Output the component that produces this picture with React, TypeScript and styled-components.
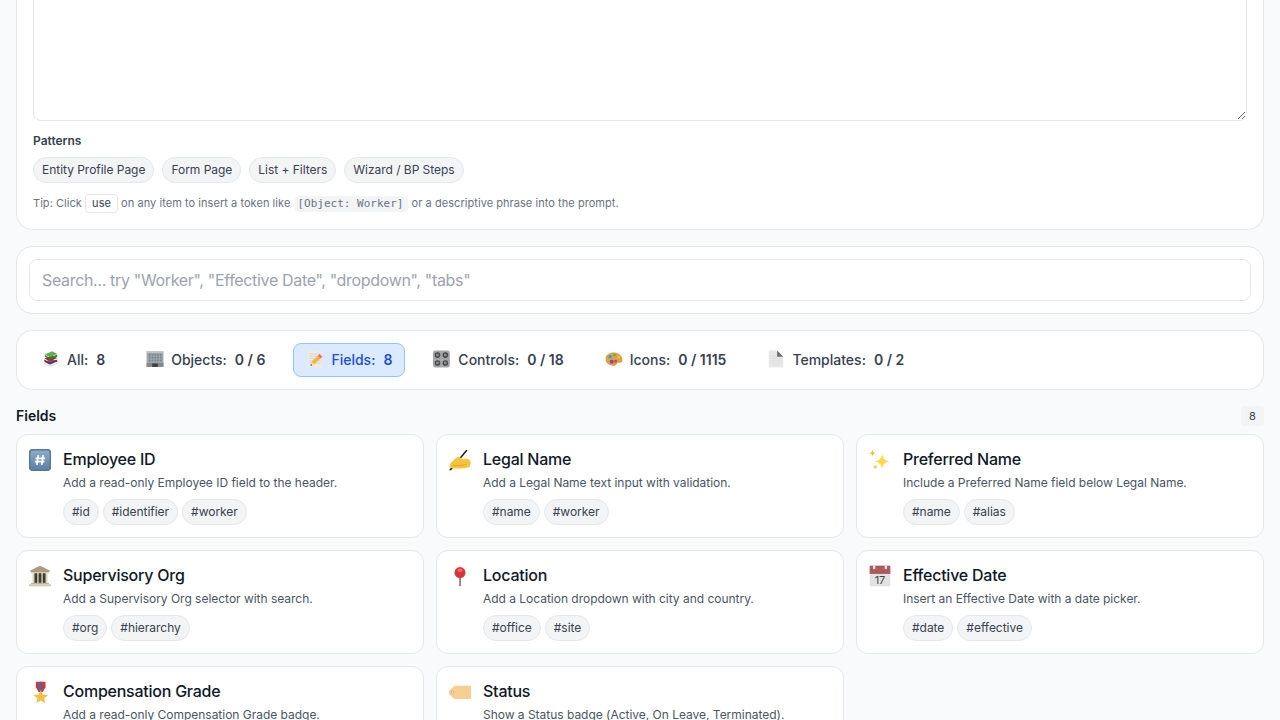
import { ReactNode } from "react";
import styled, { createGlobalStyle } from "styled-components";

const GlobalStyle = createGlobalStyle`
  html, body {
    margin: 0;
    height: 720px;
    overflow: hidden;
    background: #f9fafb;
    font-family: Inter, "Noto Sans", sans-serif;
    color: #111827;
  }
  * { box-sizing: border-box; }
`;

const Page = styled.div`
  display: flex;
  flex-direction: column;
  gap: 16px;
  padding: 0 16px;
  margin-top: -60px;
`;

const Panel = styled.section<{ $pad: number }>`
  background: #fff;
  border: 1px solid #e5e7eb;
  border-radius: 16px;
  padding: ${(p) => p.$pad}px;
`;

const Prompt = styled.textarea`
  display: block;
  width: 100%;
  height: 164px;
  border: 1px solid #e5e7eb;
  border-radius: 8px;
  background: #fff;
  resize: vertical;
  outline: none;
`;

const PatternLabel = styled.div`
  margin-top: 12px;
  font-size: 12px;
  line-height: 16px;
  font-weight: 600;
  color: #374151;
`;

const ChipRow = styled.div<{ $gap: number; $top: number }>`
  display: flex;
  gap: ${(p) => p.$gap}px;
  margin-top: ${(p) => p.$top}px;
`;

const Chip = styled.span`
  display: inline-flex;
  align-items: center;
  height: 26px;
  padding: 0 8px 2px;
  border: 1px solid #e5e7eb;
  border-radius: 999px;
  background: #f3f4f6;
  font-size: 12px;
  letter-spacing: -0.03px;
  color: #374151;
`;

const Tip = styled.div`
  margin-top: 10px;
  height: 20px;
  font-size: 11px;
  line-height: 20px;
  letter-spacing: 0.05px;
  color: #6b7280;
  white-space: pre;
`;

const Kbd = styled.kbd`
  display: inline-block;
  height: 19px;
  padding: 0 6px;
  border: 1px solid #e5e7eb;
  border-radius: 4px;
  background: #fff;
  font-family: inherit;
  font-size: 11px;
  line-height: 17px;
  color: #374151;
`;

const Code = styled.code`
  display: inline-block;
  height: 16px;
  margin-left: 1px;
  padding: 0 5px 0 3px;
  border-radius: 4px;
  background: #f3f4f6;
  font-family: "DejaVu Sans Mono", monospace;
  font-size: 11px;
  line-height: 16px;
  letter-spacing: 0;
  color: #6b7280;
`;

const SearchInput = styled.input`
  display: block;
  width: 100%;
  height: 42px;
  padding: 0 12px;
  border: 1px solid #e5e7eb;
  border-radius: 8px;
  font-family: inherit;
  font-size: 16px;
  letter-spacing: -0.33px;
  outline: none;

  &::placeholder {
    color: #9ca3af;
  }
`;

const Tabs = styled.nav`
  display: flex;
  gap: 15px;
`;

const Tab = styled.button<{ $active?: boolean }>`
  display: flex;
  align-items: center;
  gap: 7px;
  height: 34px;
  padding: 0 12px 2px;
  border: 1px solid ${(p) => (p.$active ? "#93c5fd" : "transparent")};
  border-radius: 8px;
  background: ${(p) => (p.$active ? "#dbeafe" : "transparent")};
  font-family: inherit;
  font-size: 14px;
  font-weight: 500;
  color: ${(p) => (p.$active ? "#1d4ed8" : "#374151")};
`;

const TabValue = styled.span`
  margin-left: 1px;
  font-weight: 600;
`;

const SectionHeader = styled.header`
  display: flex;
  align-items: center;
  justify-content: space-between;
  height: 20px;
  margin-bottom: 8px;
`;

const SectionTitle = styled.h2`
  margin: -2px 0 0;
  font-size: 14px;
  font-weight: 600;
  color: #111827;
`;

const CountBadge = styled.span`
  width: 23px;
  height: 20px;
  border-radius: 4px;
  background: #f3f4f6;
  font-size: 11px;
  line-height: 20px;
  text-align: center;
  color: #374151;
`;

const Grid = styled.div`
  display: grid;
  grid-template-columns: repeat(3, 1fr);
  gap: 12px;
`;

const Card = styled.article`
  display: flex;
  gap: 12px;
  height: 104px;
  padding: 12px;
  border: 1px solid #e5e7eb;
  border-radius: 12px;
  background: #fff;
`;

const CardBody = styled.div`
  min-width: 0;
`;

const CardIcon = styled.div`
  flex: none;
  width: 22px;
  padding-top: 2px;
`;

const CardTitle = styled.h3`
  margin: 0;
  font-size: 16px;
  line-height: 24px;
  font-weight: 500;
  letter-spacing: -0.24px;
  color: #111827;
`;

const CardText = styled.p`
  margin: 3px 0 7px;
  font-size: 12px;
  line-height: 18px;
  letter-spacing: -0.02px;
  color: #4b5563;
`;

const Icon = styled.svg<{ $size: number }>`
  display: block;
  flex: none;
  width: ${(p) => p.$size}px;
  height: ${(p) => p.$size}px;
`;

const Sv = ({ size, children }: { size: number; children: ReactNode }) => (
  <Icon $size={size} viewBox="0 0 32 32">
    {children}
  </Icon>
);

const Books = () => (
  <>
    <path d="M4 21l14-5 10 4-14 6z" fill="#4a63b5" />
    <path d="M4 23l10 5 13-5v2l-13 5-10-5z" fill="#d8d8e2" />
    <path d="M4 15l14-5 9 4-13 6z" fill="#b02a30" />
    <path d="M4 17l10 5 13-5v3l-13 5-10-5z" fill="#8e1f2a" />
    <path d="M5 8l13-6 9 5-13 6z" fill="#5bb24a" />
    <path d="M5 9l9 5 13-6v4l-13 5-9-5z" fill="#2f7d34" />
  </>
);

const Office = () => (
  <>
    <rect x="1" y="2" width="30" height="28" fill="#a2a6aa" />
    <rect x="1" y="2" width="30" height="3" fill="#c6c8ca" />
    {[7, 12, 17].map((y) =>
      [5, 10, 15, 20, 25].map((x) => <rect key={`${x}-${y}`} x={x} y={y} width="3" height="3" fill="#71838f" />),
    )}
    <rect x="1" y="23" width="30" height="7" fill="#85888b" />
    <rect x="11" y="24" width="10" height="6" fill="#3b3f42" />
  </>
);

const Memo = () => (
  <>
    <rect x="3" y="1" width="26" height="30" fill="#ecebe6" />
    {[7, 11, 15, 19, 23].map((y) => (
      <path key={y} d={`M6 ${y}h20`} stroke="#c8c8c4" strokeWidth="1" />
    ))}
    <path d="M8 28l2-7L24 7l5 5-14 13z" fill="#f5b43a" />
    <path d="M21 10l3-3 5 5-3 3z" fill="#e8707f" />
    <path d="M8 28l2-7 5 4z" fill="#f1d8a8" />
    <path d="M8 28l.8-3 2.200 2z" fill="#333" />
  </>
);

const Knobs = () => (
  <>
    <rect x="0" y="1" width="30" height="30" rx="4" fill="#a5a6a8" />
    {[9, 23].map((y) =>
      [8, 22].map((x) => (
        <g key={`${x}-${y}`}>
          <circle cx={x} cy={y} r="5" fill="#47484a" />
          <circle cx={x} cy={y} r="2.500" fill="#8f9092" />
        </g>
      )),
    )}
  </>
);

const Palette = () => (
  <>
    <path d="M1 15C2 6 12 3 20 5c7 2 12 8 11 14-1 5-6 3-9 4-2 1-1 5-6 5C8 28 0 23 1 15z" fill="#dba04a" />
    <circle cx="9" cy="12" r="3" fill="#2d9fd8" />
    <circle cx="17" cy="9" r="2.500" fill="#54b948" />
    <circle cx="24" cy="13" r="2.500" fill="#e8c53a" />
    <circle cx="12" cy="21" r="3.500" fill="#8e44ad" />
    <circle cx="19" cy="20" r="2.500" fill="#d9414e" />
  </>
);

const PageFacing = () => (
  <>
    <path d="M3 1h15l11 11v19H3z" fill="#e9e9e9" />
    {[11, 15, 19, 23, 27].map((y) => (
      <path key={y} d={`M5 ${y}h22`} stroke="#dadada" strokeWidth="1" />
    ))}
    <path d="M18 1l11 11H18z" fill="#6f6f6f" />
  </>
);

const Hash = () => (
  <>
    <defs>
      <linearGradient id="keycap" x1="0" y1="0" x2="0" y2="1">
        <stop offset="0" stopColor="#8eabc9" />
        <stop offset="1" stopColor="#5c80a6" />
      </linearGradient>
    </defs>
    <rect x="0" y="0" width="32" height="32" rx="5" fill="#55779c" />
    <rect x="2" y="2" width="28" height="28" rx="4" fill="url(#keycap)" />
    <path d="M13.500 9l-2 14M20.500 9l-2 14M9.500 13.500h14M8.500 18.500h14" stroke="#fff" strokeWidth="2.600" fill="none" />
  </>
);

const WritingHand = () => (
  <>
    <path d="M0 31L25 1l2 1L3 31z" fill="#1c1c1c" />
    <path d="M6 17c3-3 7-6 10-5l5 3c3-1 6-1 9 1 2 1 2 5 1 7l-1 3c-7 2-17 3-25 2-3 0-5-2-4-5 0-2 3-4 5-6z" fill="#f7c23c" />
    <path d="M5 24c7 1 15 0 21-2" stroke="#d9982a" strokeWidth="1" fill="none" />
  </>
);

const Sparkles = () => (
  <>
    <path d="M19 7c1 7 4 10 11 11-7 1-10 4-11 11-1-7-4-10-11-11 7-1 10-4 11-11z" fill="#fbd84e" />
    <path d="M5 1c.5 3 1.500 4.500 4 5-2.500.5-3.500 2-4 5-.5-3-1.500-4.500-4-5 2.500-.5 3.500-2 4-5z" fill="#f9b73b" />
    <path d="M9 22c.4 2.500 1.200 3.300 3.500 4-2.300.7-3.100 1.500-3.500 4-.4-2.500-1.200-3.300-3.500-4 2.300-.7 3.100-1.500 3.500-4z" fill="#fbc94a" />
  </>
);

const Classical = () => (
  <>
    <path d="M16 1L2 8v2h28V8z" fill="#a89b7c" />
    <rect x="3" y="10" width="26" height="2" fill="#cfc6ac" />
    <rect x="5" y="12" width="22" height="14" fill="#ddd6bf" />
    {[8, 14, 20].map((x) => (
      <rect key={x} x={x} y="12" width="4" height="14" fill="#3f3a2e" />
    ))}
    <rect x="3" y="26" width="26" height="2" fill="#bdb396" />
    <rect x="0" y="28" width="32" height="3" fill="#d2c9ae" />
  </>
);

const Pin = () => (
  <>
    <rect x="14.800" y="16" width="2.600" height="15" rx="1.200" fill="#8a8178" />
    <circle cx="16" cy="11" r="8" fill="#d8323a" />
    <ellipse cx="16" cy="7.500" rx="4" ry="2.500" fill="#ee6a6e" />
  </>
);

const Calendar = () => (
  <>
    <rect x="1" y="1" width="30" height="30" fill="#e2e2e2" />
    <rect x="1" y="1" width="30" height="12" fill="#ae5a5c" />
    <rect x="6" y="1" width="3" height="5" fill="#f3f3f3" />
    <rect x="23" y="1" width="3" height="5" fill="#f3f3f3" />
    <text x="16" y="27" fontFamily="Inter, sans-serif" fontSize="16" textAnchor="middle" fill="#444">
      17
    </text>
  </>
);

const Medal = () => (
  <>
    <path d="M10 1h14v8l-4 7h-6l-4-7z" fill="#d8372f" />
    <rect x="15" y="1" width="4" height="14" fill="#3a6fb5" />
    <path d="M17 13l3 6.500 7.500 1-5.500 5 1.500 6.500-6.500-3.500-6.500 3.500 1.500-6.500-5.500-5 7.500-1z" fill="#f4c043" />
  </>
);

const TagIcon = () => (
  <>
    <path d="M8 7h24v19H8L0 19v-5z" fill="#f8cf93" />
    <circle cx="5" cy="16.500" r="1.500" fill="#fff" stroke="#b08a52" strokeWidth=".8" />
  </>
);

const items: { icon: ReactNode; title: string; text: string; tags: string[] }[] = [
  { icon: <Hash />, title: "Employee ID", text: "Add a read-only Employee ID field to the header.", tags: ["#id", "#identifier", "#worker"] },
  { icon: <WritingHand />, title: "Legal Name", text: "Add a Legal Name text input with validation.", tags: ["#name", "#worker"] },
  { icon: <Sparkles />, title: "Preferred Name", text: "Include a Preferred Name field below Legal Name.", tags: ["#name", "#alias"] },
  { icon: <Classical />, title: "Supervisory Org", text: "Add a Supervisory Org selector with search.", tags: ["#org", "#hierarchy"] },
  { icon: <Pin />, title: "Location", text: "Add a Location dropdown with city and country.", tags: ["#office", "#site"] },
  { icon: <Calendar />, title: "Effective Date", text: "Insert an Effective Date with a date picker.", tags: ["#date", "#effective"] },
  { icon: <Medal />, title: "Compensation Grade", text: "Add a read-only Compensation Grade badge.", tags: ["#grade"] },
  { icon: <TagIcon />, title: "Status", text: "Show a Status badge (Active, On Leave, Terminated).", tags: ["#status"] },
];

const tabs: { icon: ReactNode; label: string; value: string; active?: boolean }[] = [
  { icon: <Books />, label: "All:", value: "8" },
  { icon: <Office />, label: "Objects:", value: "0 / 6" },
  { icon: <Memo />, label: "Fields:", value: "8", active: true },
  { icon: <Knobs />, label: "Controls:", value: "0 / 18" },
  { icon: <Palette />, label: "Icons:", value: "0 / 1115" },
  { icon: <PageFacing />, label: "Templates:", value: "0 / 2" },
];

const patterns = ["Entity Profile Page", "Form Page", "List + Filters", "Wizard / BP Steps"];

export default function App() {
  return (
    <>
      <GlobalStyle />
      <Page>
        <Panel $pad={16}>
          <Prompt />
          <PatternLabel>Patterns</PatternLabel>
          <ChipRow $gap={8} $top={8}>
            {patterns.map((p) => (
              <Chip key={p}>{p}</Chip>
            ))}
          </ChipRow>
          <Tip>
            Tip: Click <Kbd>use</Kbd> on any item to insert a token like <Code>[Object: Worker]</Code> or a descriptive
            phrase into the prompt.
          </Tip>
        </Panel>

        <Panel $pad={12}>
          <SearchInput placeholder={'Search... try "Worker", "Effective Date", "dropdown", "tabs"'} />
        </Panel>

        <Panel $pad={12}>
          <Tabs>
            {tabs.map((t) => (
              <Tab key={t.label} $active={t.active}>
                <Sv size={18}>{t.icon}</Sv>
                <span>{t.label}</span>
                <TabValue>{t.value}</TabValue>
              </Tab>
            ))}
          </Tabs>
        </Panel>

        <div>
          <SectionHeader>
            <SectionTitle>Fields</SectionTitle>
            <CountBadge>8</CountBadge>
          </SectionHeader>
          <Grid>
            {items.map((item) => (
              <Card key={item.title}>
                <CardIcon>
                  <Sv size={22}>{item.icon}</Sv>
                </CardIcon>
                <CardBody>
                  <CardTitle>{item.title}</CardTitle>
                  <CardText>{item.text}</CardText>
                  <ChipRow $gap={4} $top={0}>
                    {item.tags.map((tag) => (
                      <Chip key={tag}>{tag}</Chip>
                    ))}
                  </ChipRow>
                </CardBody>
              </Card>
            ))}
          </Grid>
        </div>
      </Page>
    </>
  );
}
